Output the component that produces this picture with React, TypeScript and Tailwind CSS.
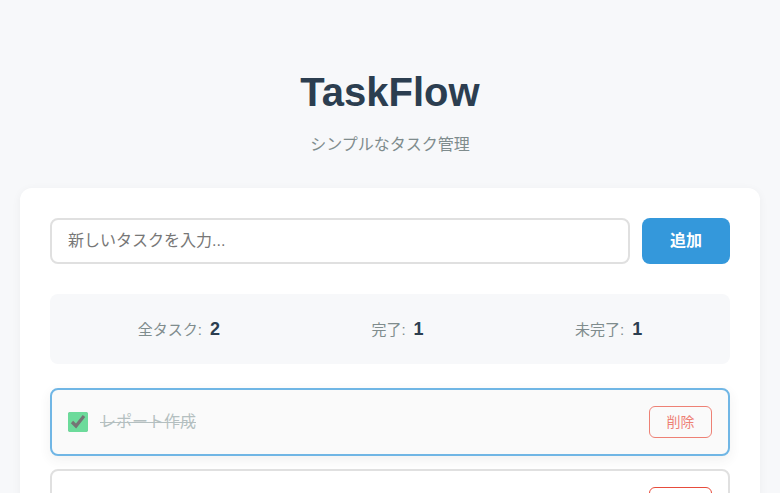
import { useState } from 'react';

type Task = { id: number; text: string; done: boolean };

const initialTasks: Task[] = [
  { id: 1, text: 'レポート作成', done: true },
  { id: 2, text: '会議の準備', done: false },
];

export default function App() {
  const [tasks, setTasks] = useState<Task[]>(initialTasks);
  const [draft, setDraft] = useState('');

  const total = tasks.length;
  const done = tasks.filter((t) => t.done).length;

  const addTask = () => {
    if (!draft.trim()) return;
    setTasks([...tasks, { id: Date.now(), text: draft.trim(), done: false }]);
    setDraft('');
  };

  return (
    <div
      className="min-h-screen bg-[#f7f8fa] text-[#2c3e50]"
      style={{ fontFamily: '"Liberation Sans", "Noto Sans CJK JP", sans-serif' }}
    >
      <div className="mx-auto max-w-[800px] px-5 pt-[69px] pb-10">
        <header className="text-center">
          <h1 className="text-[40px] font-bold leading-[46px] text-[#2c3e50]">TaskFlow</h1>
          <p className="mt-[18px] text-base leading-[23px] text-[#7f8c8d]">シンプルなタスク管理</p>
        </header>

        <main className="mt-[32px] rounded-xl bg-white p-[30px] shadow-[0_2px_10px_rgba(0,0,0,0.05)]">
          <div className="flex gap-3">
            <input
              value={draft}
              onChange={(e) => setDraft(e.target.value)}
              placeholder="新しいタスクを入力..."
              className="h-[46px] flex-1 rounded-lg border-2 border-[#e0e0e0] px-4 text-base outline-none placeholder:text-[#777]"
            />
            <button
              onClick={addTask}
              className="h-[46px] w-[88px] rounded-lg bg-[#3498db] text-base font-bold text-white"
            >
              追加
            </button>
          </div>

          <div className="mt-[30px] flex h-[70px] items-center justify-around rounded-lg bg-[#f7f8fa] px-3">
            <div className="flex items-baseline gap-2">
              <span className="text-[15px] text-[#7f8c8d]">全タスク:</span>
              <span className="text-lg font-bold text-[#2c3e50]">{total}</span>
            </div>
            <div className="flex items-baseline gap-2">
              <span className="text-[15px] text-[#7f8c8d]">完了:</span>
              <span className="text-lg font-bold text-[#2c3e50]">{done}</span>
            </div>
            <div className="flex items-baseline gap-2">
              <span className="text-[15px] text-[#7f8c8d]">未完了:</span>
              <span className="text-lg font-bold text-[#2c3e50]">{total - done}</span>
            </div>
          </div>

          <ul className="mt-6 flex flex-col gap-[13px]">
            {tasks.map((task) => (
              <li
                key={task.id}
                className={`flex items-center gap-3 rounded-lg border-2 px-4 py-4 ${
                  task.done
                    ? 'border-[#3498db] bg-[#f9f9f9] opacity-70 shadow-[0_4px_12px_rgba(0,0,0,0.08)]'
                    : 'border-[#e0e0e0] bg-white'
                }`}
              >
                <input
                  type="checkbox"
                  checked={task.done}
                  onChange={() =>
                    setTasks(tasks.map((t) => (t.id === task.id ? { ...t, done: !t.done } : t)))
                  }
                  className="h-5 w-5 accent-[#2ecc71]"
                />
                <span
                  className={`flex-1 text-base ${
                    task.done ? 'text-[#95a5a6] line-through' : 'text-[#2c3e50]'
                  }`}
                >
                  {task.text}
                </span>
                <button
                  onClick={() => setTasks(tasks.filter((t) => t.id !== task.id))}
                  className="h-8 w-[63px] rounded-md border border-[#e74c3c] text-sm text-[#e74c3c]"
                >
                  削除
                </button>
              </li>
            ))}
          </ul>
        </main>
      </div>
    </div>
  );
}
